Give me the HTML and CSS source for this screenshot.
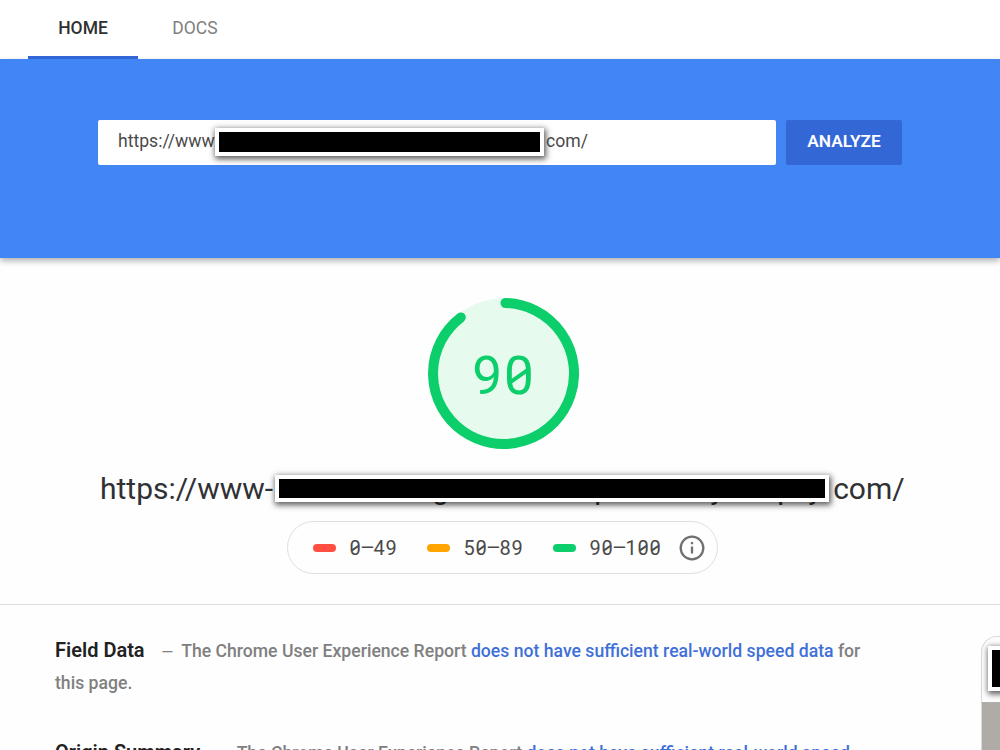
FILE: index.html
```html
<!DOCTYPE html>
<html lang="en">

<head>
    <meta charset="UTF-8">
    <meta name="viewport" content="width=device-width, initial-scale=1.0">
    <title>PageSpeed Insights</title>
    <link rel="stylesheet" href="styles.css">
</head>

<body>
    <nav class="tabs">
        <a class="tab active" href="#home"><span>HOME</span></a>
        <a class="tab" href="#docs"><span>DOCS</span></a>
    </nav>

    <form class="search">
        <div class="url-field">
            <span class="url-start">https://www</span>
            <span class="redacted"></span>
            <span class="url-end">com/</span>
        </div>
        <button class="analyze" type="button"><span>ANALYZE</span></button>
    </form>

    <section class="summary">
        <div class="gauge">
            <svg viewBox="0 0 151 151">
                <circle class="gauge-base" cx="75.5" cy="75.5" r="75" />
                <path class="gauge-arc" d="M77.5 5 A70.5 70.5 0 1 1 32.8 19.4" />
            </svg>
            <span class="score"><i>9</i><i class="zero">0</i></span>
        </div>
        <h1 class="page-url">
            <span class="url-start">https://www-</span>
            <span class="redacted"><b>g</b><b>p</b><b>y</b><b>p</b><b>y</b></span>
            <span class="url-end">com/</span>
        </h1>
        <div class="scale">
            <span class="range fail"><i class="zero">0</i><i class="dash">–</i><i>4</i><i>9</i></span>
            <span class="range average"><i>5</i><i class="zero">0</i><i class="dash">–</i><i>8</i><i>9</i></span>
            <span class="range pass"><i>9</i><i class="zero">0</i><i class="dash">–</i><i>1</i><i class="zero">0</i><i class="zero">0</i></span>
            <svg class="info" viewBox="0 0 26 26">
                <circle cx="13" cy="13" r="11.3" />
                <path d="M13 11.5v7M13 7v2.3" />
            </svg>
        </div>
    </section>

    <section class="report">
        <div class="metrics">
            <p><strong>Field Data</strong><span class="sep">—</span><span class="text">The Chrome User Experience Report <a href="#field">does not have sufficient real-world speed data</a> for this page.</span></p>
            <p><strong>Origin Summary</strong><span class="sep">—</span><span class="text">The Chrome User Experience Report <a href="#origin">does not have sufficient real-world speed data</a></span></p>
        </div>
        <div class="device">
            <div class="device-top"><span class="redacted"></span></div>
            <div class="device-screen"></div>
        </div>
    </section>
</body>

</html>
```
FILE: styles.css
```css
* {
    padding: 0;
    margin: 0;
    box-sizing: border-box;
}

body {
    width: 1000px;
    height: 750px;
    overflow: hidden;
    background: #fefefe;
    color: #303134;
    font-family: Roboto, "Liberation Sans", sans-serif;
}

a {
    text-decoration: none;
}

i {
    font-style: normal;
}

.redacted {
    display: block;
    flex: none;
    background: #000;
    border: 4px solid #fff;
    box-shadow: 1px 2px 6px 1px rgba(0, 0, 0, .65);
}

/* tabs */
.tabs {
    display: flex;
    height: 59px;
    padding-left: 28px;
    background: #fff;
}

.tab {
    width: 110px;
    height: 59px;
    line-height: 56px;
    text-align: center;
    font-size: 17.5px;
    color: #808080;
}

.tab.active {
    color: #303030;
    font-weight: 500;
    border-bottom: 3px solid #3367d6;
}

.tab + .tab {
    margin-left: 2px;
}

/* search */
.search {
    display: flex;
    gap: 10px;
    height: 199px;
    padding: 61px 98px 0;
    background: #4285f4;
    box-shadow: 0 3px 6px rgba(0, 0, 0, .3);
}

.url-field {
    display: flex;
    align-items: center;
    width: 678px;
    height: 45px;
    padding-left: 20px;
    background: #fff;
    border-radius: 2px;
    font-size: 17.6px;
    color: #4a4a4a;
}

.url-field .url-start {
    width: 97px;
    margin-top: -4px;
}

.url-field .redacted {
    width: 329px;
    height: 28px;
    margin-top: -2px;
}

.url-field .url-end {
    margin: -4px 0 0 2px;
}

.analyze {
    width: 116px;
    height: 45px;
    padding-bottom: 3px;
    background: #3367d6;
    border: none;
    border-radius: 2px;
    font: 600 17.3px Roboto, sans-serif;
    color: #fff;
}

/* score */
.summary {
    display: flex;
    flex-direction: column;
    align-items: center;
    height: 347px;
    padding-top: 40px;
    border-bottom: 1px solid #dcdcdc;
}

.gauge {
    display: grid;
    place-items: center;
    width: 151px;
    height: 151px;
    margin-left: 6px;
}

.gauge > * {
    grid-area: 1 / 1;
}

.gauge svg {
    width: 151px;
    height: 151px;
}

.gauge-base {
    fill: #e6faee;
}

.gauge-arc {
    fill: none;
    stroke: #0cce6b;
    stroke-width: 10;
    stroke-linecap: round;
}

.score {
    display: flex;
    margin-top: 5px;
    font-size: 53px;
    line-height: 60px;
    color: #0cce6b;
}

.score i,
.range i {
    position: relative;
    width: .6em;
    text-align: center;
}

/* slash through the zero */
.zero::after {
    content: '';
    position: absolute;
    left: 50%;
    top: 50%;
    width: .38em;
    height: .075em;
    background: currentColor;
    transform: translate(-50%, -50%) rotate(-35deg);
}

.page-url {
    display: flex;
    align-items: center;
    isolation: isolate;
    width: 804px;
    height: 40px;
    margin: 20px 0 0 4px;
    font-size: 30px;
    font-weight: 400;
    white-space: nowrap;
}

.page-url .url-start {
    width: 174px;
    margin-top: -1px;
}

.page-url .redacted {
    position: relative;
    width: 554px;
    height: 27px;
    margin: -1px 0 0 2px;
}

/* letters under the bar, only their tails show */
.page-url b {
    position: absolute;
    z-index: -1;
    top: -8px;
    line-height: 36px;
    font-weight: 400;
}

.page-url b:nth-child(1) {
    left: 153px;
}

.page-url b:nth-child(2) {
    left: 315px;
}

.page-url b:nth-child(3) {
    left: 431px;
}

.page-url b:nth-child(4) {
    left: 498px;
}

.page-url b:nth-child(5) {
    left: 529px;
}

.page-url .url-end {
    margin: -1px 0 0 4px;
}

.scale {
    display: flex;
    align-items: center;
    width: 431px;
    height: 53px;
    margin: 12px 0 0 5px;
    padding-left: 25px;
    border: 1px solid #dfdfdf;
    border-radius: 27px;
    font-size: 20px;
    color: #4a4a4a;
}

.range {
    display: flex;
    align-items: center;
    margin-right: 30px;
}

.range::before {
    content: '';
    width: 23px;
    height: 8px;
    margin-right: 13px;
    border-radius: 4px;
    background: #ff4e42;
}

.range.average::before {
    background: #ffa400;
}

.range.pass::before {
    background: #0cce6b;
}

.range.pass {
    margin-right: 18px;
}

.dash {
    transform: scaleX(1.15);
}

.info {
    width: 26px;
    height: 26px;
    fill: none;
    stroke: #707070;
    stroke-width: 2.3;
}

/* report */
.report {
    display: flex;
    height: 145px;
    overflow: hidden;
}

.metrics {
    flex: none;
    width: 981px;
    padding: 30px 110px 0 55px;
    font-size: 17.62px;
    line-height: 31px;
}

.metrics p {
    height: 63px;
    margin-bottom: 39px;
    font-weight: 500;
    color: #808080;
}

.metrics strong {
    font-size: 20px;
    font-weight: 600;
    color: #212121;
}

.metrics .sep {
    margin: 0 8px 0 17px;
    font-size: 15px;
}

.metrics a {
    color: #3f70d8;
}

.device {
    flex: none;
    width: 60px;
    height: 114px;
    margin-top: 31px;
    border: 1px solid #dadada;
    border-bottom: none;
    border-radius: 16px 0 0 0;
}

.device-top {
    height: 65px;
    padding: 9px 0 0 6px;
}

.device-top .redacted {
    width: 60px;
    height: 45px;
}

.device-screen {
    height: 48px;
    background: #afaca7;
}
```
